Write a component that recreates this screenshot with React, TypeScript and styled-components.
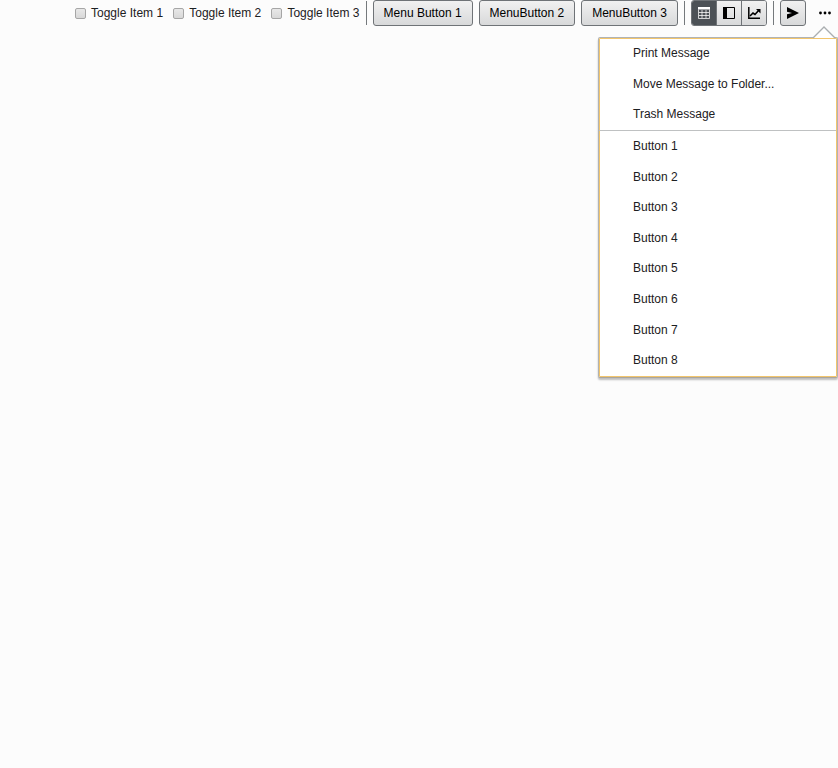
import React from "react";
import styled, { createGlobalStyle } from "styled-components";

const GlobalStyle = createGlobalStyle`
  * { box-sizing: border-box; }
  html, body { margin: 0; height: 100%; background: #fcfcfc; overflow: hidden; }
  body { font: 12px/16px "Liberation Sans", Arial, sans-serif; color: #1c2022; }
`;

const Toolbar = styled.div`
  display: flex;
  align-items: center;
  justify-content: flex-end;
  width: 838px;
  height: 26px;
`;

const ToggleItem = styled.label`
  display: flex;
  align-items: center;
  flex: none;
  width: 98.2px;
  white-space: nowrap;
  &:nth-of-type(3) { width: 95px; }
`;

const Checkbox = styled.input`
  appearance: none;
  flex: none;
  width: 11px;
  height: 11px;
  margin: 1px 5px 0 0;
  border: 1px solid #a6a6a6;
  border-radius: 2px;
  background: linear-gradient(#e8e8e8, #d8d8d8);
`;

const Separator = styled.span<{ $before?: number; $after?: number }>`
  flex: none;
  width: 1px;
  height: 24px;
  margin: 0 ${(p) => p.$after ?? 6}px 0 ${(p) => p.$before ?? 6}px;
  background: #75797c;
`;

const Button = styled.button<{ $width: number; $gap?: number; $trim?: number }>`
  display: flex;
  align-items: center;
  justify-content: center;
  flex: none;
  width: ${(p) => p.$width}px;
  height: 26px;
  margin: 0 ${(p) => p.$gap ?? 0}px 0 0;
  padding: 0 ${(p) => p.$trim ?? 0}px 0 0;
  font: inherit;
  color: #000;
  white-space: nowrap;
  border: 1px solid #6f7377;
  border-radius: 3px;
  background: linear-gradient(#f1f1f1, #d8d9da);
`;

const ButtonGroup = styled.div`
  display: flex;
  flex: none;
  width: 76px;
  height: 26px;
  border: 1px solid #6f7377;
  border-radius: 3px;
  overflow: hidden;
`;

const Segment = styled.button<{ $active?: boolean }>`
  display: flex;
  align-items: center;
  justify-content: center;
  flex: 1;
  padding: 0;
  border: 0;
  color: ${(p) => (p.$active ? "#fff" : "#000")};
  background: ${(p) => (p.$active ? "#4c5156" : "linear-gradient(#f1f1f1, #d8d9da)")};
  & + & { border-left: 1px solid #6f7377; }
`;

const OverflowButton = styled.button`
  display: flex;
  align-items: center;
  justify-content: center;
  flex: none;
  width: 26px;
  height: 26px;
  margin-left: 6px;
  padding: 0;
  border: 0;
  background: none;
`;

const Pointer = styled.svg`
  position: absolute;
  z-index: 2;
  left: 812px;
  top: 26px;
`;

const Menu = styled.div`
  position: absolute;
  top: 37px;
  left: 598px;
  width: 240px;
  height: 341px;
  border: 1px solid #b0b3b5;
  border-bottom-color: #aaa59c;
  border-radius: 2px;
  background: #fff;
  box-shadow: inset 0 0 0 1px #f2c56c, 0 2px 2px rgba(0, 0, 0, 0.25);
`;

const MenuItem = styled.div`
  display: flex;
  align-items: center;
  height: 30.55px;
  padding-left: 34px;
  white-space: nowrap;
`;

const MenuDivider = styled.div`
  height: 1px;
  margin: 0.4px 1px 0 0;
  background: #bfc1c2;
`;

const TableIcon = () => (
  <svg width="12" height="12" viewBox="0 0 12 12">
    <path fill="currentColor" d="M0 0h12v2.5H0z" />
    <path fill="none" stroke="currentColor" strokeOpacity=".75" d="M.5 2.5v9h11v-9M4 3v8M8 3v8M1 5.5h10M1 8.5h10" />
  </svg>
);

const PanelIcon = () => (
  <svg width="12" height="12" viewBox="0 0 12 12">
    <path fill="currentColor" d="M0 0h4v12H0z" />
    <path fill="none" stroke="currentColor" d="M4 .5h7.5v11H4" />
  </svg>
);

const ChartIcon = () => (
  <svg width="13" height="12" viewBox="0 0 13 12">
    <path fill="none" stroke="currentColor" strokeWidth="1.5" d="M.8 0v11.2H12" />
    <path fill="none" stroke="currentColor" strokeWidth="1.6" d="M2 9l3-3 2 1.5L11 3" />
    <path fill="currentColor" d="M8 2h4.5v4.5z" />
  </svg>
);

const SendIcon = () => (
  <svg width="12" height="12" viewBox="0 0 12 12">
    <path fill="currentColor" d="M0 0l12 6L0 12V7.2L5 6 0 4.8z" />
  </svg>
);

const DotsIcon = () => (
  <svg width="12" height="4" viewBox="0 0 12 4">
    <circle cx="1.5" cy="2" r="1.4" />
    <circle cx="6" cy="2" r="1.4" />
    <circle cx="10.5" cy="2" r="1.4" />
  </svg>
);

const messageActions = ["Print Message", "Move Message to Folder...", "Trash Message"];
const buttons = [1, 2, 3, 4, 5, 6, 7, 8];

export default function App() {
  return (
    <>
      <GlobalStyle />
      <Toolbar>
        {[1, 2, 3].map((n) => (
          <ToggleItem key={n}>
            <Checkbox type="checkbox" />
            Toggle Item {n}
          </ToggleItem>
        ))}
        <Separator $before={-0.4} />
        <Button $width={100} $gap={6} $trim={0.8}>Menu Button 1</Button>
        <Button $width={96} $gap={6} $trim={0.3}>MenuButton 2</Button>
        <Button $width={97}>MenuButton 3</Button>
        <Separator />
        <ButtonGroup>
          <Segment $active aria-label="Table view"><TableIcon /></Segment>
          <Segment aria-label="Panel view"><PanelIcon /></Segment>
          <Segment aria-label="Chart view"><ChartIcon /></Segment>
        </ButtonGroup>
        <Separator />
        <Button $width={26} $trim={0.4} aria-label="Send"><SendIcon /></Button>
        <OverflowButton aria-label="More"><DotsIcon /></OverflowButton>
      </Toolbar>
      <Menu>
        {messageActions.map((label) => <MenuItem key={label}>{label}</MenuItem>)}
        <MenuDivider />
        {buttons.map((n) => <MenuItem key={n}>Button {n}</MenuItem>)}
      </Menu>
      <Pointer width="24" height="13" viewBox="0 0 24 13">
        <path fill="#fff" stroke="#aaaeb0" strokeWidth="1.4" d="M1 12L12 1l11 11" />
      </Pointer>
    </>
  );
}
